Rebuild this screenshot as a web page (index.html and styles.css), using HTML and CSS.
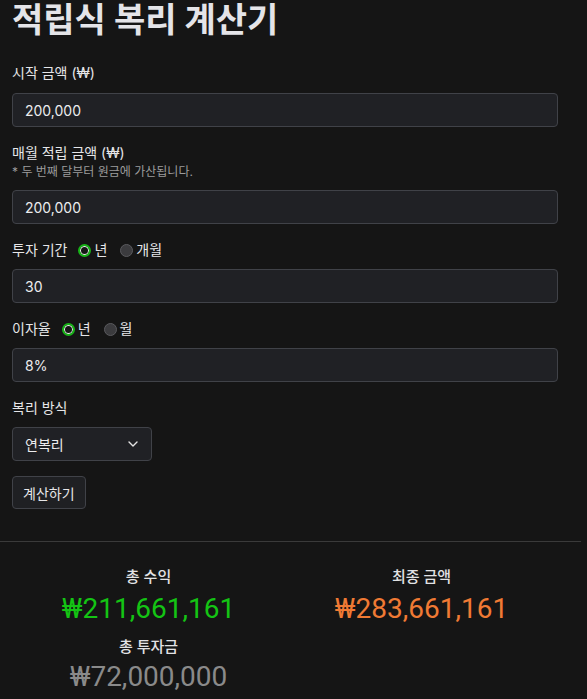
FILE: index.html
```html
<!DOCTYPE html>
<html lang="ko">
<head>
    <meta charset="UTF-8">
    <meta name="viewport" content="width=device-width, initial-scale=1.0">
    <title>적립식 복리 계산기</title>
    <link rel="stylesheet" href="styles.css">
</head>
<body>

<div class="page">
    <h1 class="title">적립식 복리 계산기</h1>

    <!-- Input form -->
    <form class="calc-form" onsubmit="return false;">
        <div class="field">
            <label class="field-label" for="principal">시작 금액 (₩)</label>
            <input class="text-input" type="text" id="principal" value="200,000">
        </div>

        <div class="field">
            <label class="field-label" for="monthly">매월 적립 금액 (₩)</label>
            <div class="field-hint">* 두 번째 달부터 원금에 가산됩니다.</div>
            <input class="text-input" type="text" id="monthly" value="200,000">
        </div>

        <div class="field">
            <div class="field-label radio-row">
                <span>투자 기간</span>
                <label class="radio"><input type="radio" name="periodUnit" checked><span>년</span></label>
                <label class="radio"><input type="radio" name="periodUnit"><span>개월</span></label>
            </div>
            <input class="text-input" type="text" id="period" value="30">
        </div>

        <div class="field">
            <div class="field-label radio-row">
                <span>이자율</span>
                <label class="radio"><input type="radio" name="rateUnit" checked><span>년</span></label>
                <label class="radio"><input type="radio" name="rateUnit"><span>월</span></label>
            </div>
            <input class="text-input" type="text" id="rate" value="8%">
        </div>

        <div class="field">
            <label class="field-label" for="compound">복리 방식</label>
            <div class="select-wrap">
                <select class="select" id="compound">
                    <option>연복리</option>
                    <option>월복리</option>
                </select>
                <svg class="chevron" width="10" height="6" viewBox="0 0 10 6">
                    <path d="M1 1l4 4 4-4" fill="none" stroke="#e4e4e4" stroke-width="1.4" stroke-linecap="round" stroke-linejoin="round"/>
                </svg>
            </div>
        </div>

        <button class="calc-btn" type="submit">계산하기</button>
    </form>

    <hr class="divider">

    <!-- Results -->
    <div class="results">
        <div class="result">
            <div class="result-label">총 수익</div>
            <div class="result-value profit">₩211,661,161</div>
        </div>
        <div class="result">
            <div class="result-label">최종 금액</div>
            <div class="result-value total">₩283,661,161</div>
        </div>
        <div class="result">
            <div class="result-label">총 투자금</div>
            <div class="result-value invested">₩72,000,000</div>
        </div>
    </div>
</div>

</body>
</html>
```

FILE: styles.css
```css
html, body {
    margin: 0;
    background-color: #151515;
}

body {
    font-family: Inter, "Noto Sans CJK KR", sans-serif;
    color: #e6e6e8;
    overflow: hidden;
}

.page {
    padding: 0 12px;
    width: 546px;
}

.title {
    margin: 0 0 23px;
    font-size: 34px;
    line-height: 40px;
    font-weight: 700;
    color: #e4e4e8;
}

.calc-form {
    display: flex;
    flex-direction: column;
    gap: 16px;
}

.field {
    display: flex;
    flex-direction: column;
}

.field-label {
    font-size: 14px;
    line-height: 20px;
    height: 20px;
    font-weight: 400;
    margin-bottom: 10px;
}

.field-label + .field-hint {
    margin-top: -9px;
}

.field-hint {
    font-size: 12px;
    line-height: 16px;
    color: #9c9c9c;
    margin-bottom: 10px;
}

.text-input, .select {
    height: 34px;
    box-sizing: border-box;
    padding: 0 12px;
    border: 1px solid #404248;
    border-radius: 4px;
    background-color: #202125;
    color: #ececee;
    font-family: inherit;
    font-size: 14px;
}

.radio-row {
    display: flex;
    align-items: center;
    margin-bottom: 9px;
}

.radio {
    display: flex;
    align-items: center;
    gap: 3px;
    margin-left: 11px;
}

.radio + .radio {
    margin-left: 13px;
}

.radio input {
    appearance: none;
    margin: 0;
    width: 13px;
    height: 13px;
    border-radius: 50%;
    border: 1px solid #5a5a5e;
    background-color: #3b3b3e;
    box-sizing: border-box;
}

.radio input:checked {
    border: 2px solid #17b317;
    background-color: #151515;
    box-shadow: inset 0 0 0 1px #f2f2f2;
}

.select-wrap {
    position: relative;
    width: 140px;
    margin-top: -1px;
}

.select {
    appearance: none;
    width: 100%;
}

.chevron {
    position: absolute;
    right: 14px;
    top: 14px;
    pointer-events: none;
}

.calc-btn {
    align-self: flex-start;
    margin-top: -1px;
    height: 33px;
    padding: 0 10px;
    border: 1px solid #404248;
    border-radius: 4px;
    background-color: #1f2023;
    color: #e6e6e8;
    font-family: inherit;
    font-size: 14px;
}

.divider {
    margin: 32px -12px 0;
    width: 581px;
    border: 0;
    border-top: 1px solid #3a3a3a;
}

.results {
    display: grid;
    grid-template-columns: 1fr 1fr;
    row-gap: 10px;
    padding-top: 24px;
    text-align: center;
}

.result-label {
    font-size: 15px;
    line-height: 22px;
    font-weight: 500;
    color: #e2e2e4;
}

.result-value {
    margin-top: 4px;
    font-family: Roboto, "Noto Sans CJK KR", sans-serif;
    font-size: 28px;
    line-height: 34px;
}

.result:nth-child(3) .result-value {
    margin-top: 2px;
}

.profit {
    color: #14c414;
}

.total {
    color: #f07a34;
}

.invested {
    color: #8a8a8a;
}
```
